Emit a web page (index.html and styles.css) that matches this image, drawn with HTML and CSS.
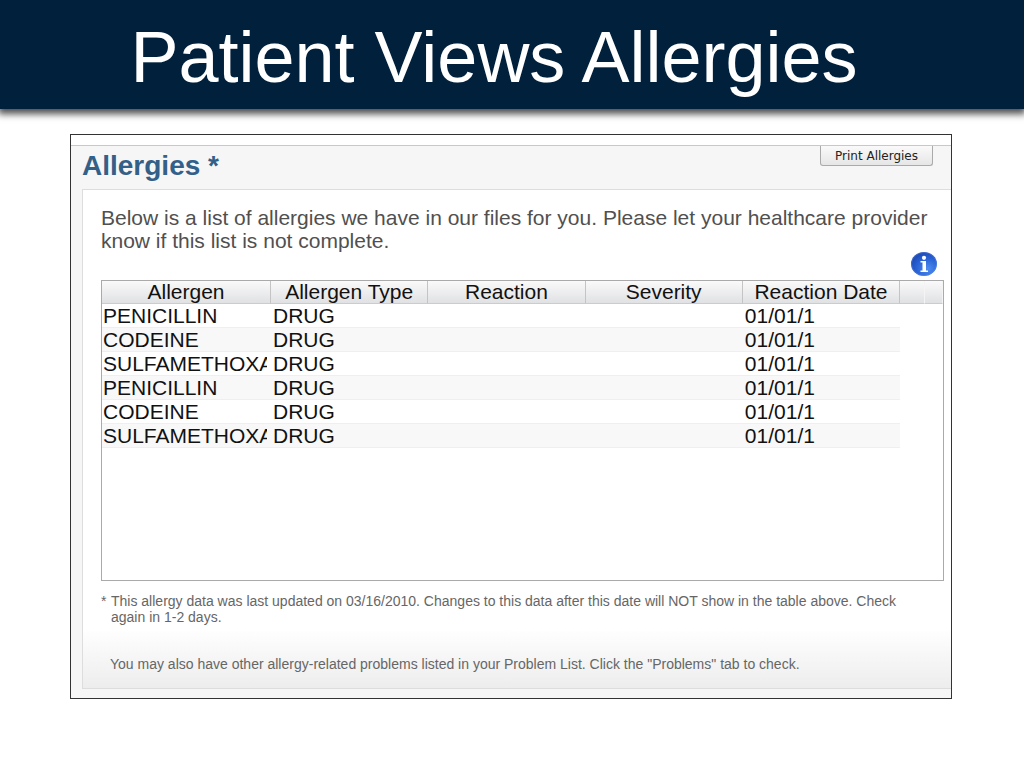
FILE: index.html
```html
<!DOCTYPE html>
<html lang="en">
<head>
    <meta charset="UTF-8">
    <meta name="viewport" content="width=device-width, initial-scale=1.0">
    <title>Patient Views Allergies</title>
    <link rel="stylesheet" href="styles.css">
</head>
<body>

    <header class="title-bar">
        <h1>Patient Views Allergies</h1>
    </header>

    <main class="frame">
        <div class="top-row">
            <h2>Allergies *</h2>
            <button type="button" class="print-btn">Print Allergies</button>
        </div>

        <section class="panel">
            <p class="intro">Below is a list of allergies we have in our files for you. Please let your healthcare provider<br>know if this list is not complete.</p>

            <div class="info-row">
                <button type="button" class="info-btn" aria-label="Information">
                    <svg viewBox="0 0 26 24" width="26" height="24">
                        <defs>
                            <radialGradient id="infoBlue" cx="65%" cy="70%" r="75%">
                                <stop offset="0" stop-color="#4d8df0"/>
                                <stop offset="0.6" stop-color="#2860d4"/>
                                <stop offset="1" stop-color="#1c46b0"/>
                            </radialGradient>
                        </defs>
                        <ellipse cx="13" cy="12" rx="13" ry="12" fill="url(#infoBlue)"/>
                        <ellipse cx="13" cy="12" rx="12.500" ry="11.500" fill="none" stroke="#6d97e6" stroke-width="1" opacity="0.4"/>
                        <circle cx="13" cy="5.800" r="2.100" fill="#fff"/>
                        <path d="M9.500 9h5.500v9.500h2v1.500H9.500v-1.500h2V10.500h-2z" fill="#fff"/>
                    </svg>
                </button>
            </div>

            <div class="table-box">
                <table>
                    <colgroup>
                        <col class="col-first">
                        <col class="col-data">
                        <col class="col-data">
                        <col class="col-data">
                        <col class="col-data">
                        <col class="col-pad">
                        <col>
                    </colgroup>
                    <thead>
                        <tr>
                            <th>Allergen</th>
                            <th>Allergen Type</th>
                            <th>Reaction</th>
                            <th>Severity</th>
                            <th>Reaction Date</th>
                            <th class="pad"></th>
                            <th class="pad"></th>
                        </tr>
                    </thead>
                    <tbody>
                        <tr><td><span>PENICILLIN</span></td><td>DRUG</td><td></td><td></td><td>01/01/1</td></tr>
                        <tr><td><span>CODEINE</span></td><td>DRUG</td><td></td><td></td><td>01/01/1</td></tr>
                        <tr><td><span>SULFAMETHOXA</span></td><td>DRUG</td><td></td><td></td><td>01/01/1</td></tr>
                        <tr><td><span>PENICILLIN</span></td><td>DRUG</td><td></td><td></td><td>01/01/1</td></tr>
                        <tr><td><span>CODEINE</span></td><td>DRUG</td><td></td><td></td><td>01/01/1</td></tr>
                        <tr><td><span>SULFAMETHOXA</span></td><td>DRUG</td><td></td><td></td><td>01/01/1</td></tr>
                    </tbody>
                </table>
            </div>

            <div class="note">
                <span class="star">*</span>
                <p>This allergy data was last updated on 03/16/2010. Changes to this data after this date will NOT show in the table above. Check<br>again in 1-2 days.</p>
            </div>
            <p class="more">You may also have other allergy-related problems listed in your Problem List. Click the "Problems" tab to check.</p>
        </section>
    </main>

</body>
</html>
```
FILE: styles.css
```css
* {
    box-sizing: border-box;
}

body {
    margin: 0;
    background-color: #fff;
    font-family: "Liberation Sans", Arial, sans-serif;
}

h1, h2, p {
    margin: 0;
}

/* Title bar */
.title-bar {
    background-color: #00203c;
    padding: 17px 36px 12px 0;
    box-shadow: 0 3px 7px 2px rgba(0, 0, 0, 0.7);
    text-align: center;
}

.title-bar h1 {
    color: #fff;
    font-size: 72px;
    font-weight: normal;
    line-height: 80px;
}

/* Allergies window */
.frame {
    margin: 25px 72px 0 70px;
    border: 1px solid #333;
    padding: 10px 0 9px;
    background: linear-gradient(#fff 10px, #f6f6f6 10px);
}

.top-row {
    display: flex;
    justify-content: space-between;
    align-items: flex-start;
    height: 44px;
    padding: 0 18px 0 11px;
    border-top: 1px solid #c8c8c8;
}

.top-row h2 {
    padding-top: 4px;
    color: #336088;
    font-size: 28px;
    line-height: 32px;
}

.print-btn {
    width: 113px;
    height: 20px;
    padding: 0;
    border: 1px solid #aaa;
    border-top: none;
    border-radius: 0 0 3px 3px;
    background: linear-gradient(#fafafa, #e6e6e6);
    color: #222;
    font-family: "DejaVu Sans", sans-serif;
    font-size: 12px;
    line-height: 18px;
    white-space: nowrap;
    cursor: pointer;
}

.panel {
    margin-left: 11px;
    padding: 16px 7px 16px 18px;
    border: 1px solid #ddd;
    border-right: none;
    background: linear-gradient(#fff 88%, #ededed);
}

.intro {
    color: #505050;
    font-size: 21px;
    line-height: 23px;
    white-space: nowrap;
}

.info-row {
    display: flex;
    justify-content: flex-end;
    padding-right: 7px;
}

.info-btn {
    padding: 0;
    border: none;
    background: none;
    cursor: pointer;
}

.info-btn svg {
    display: block;
}

/* Allergy table */
.table-box {
    min-height: 301px;
    margin-top: 4px;
    border: 1px solid #aaa;
    background-color: #fff;
}

table {
    width: 100%;
    border-collapse: separate;
    border-spacing: 0;
    table-layout: fixed;
    color: #111;
    font-size: 21px;
    line-height: 23px;
}

.col-first {
    width: 20.1%;
}

.col-data {
    width: 18.7%;
}

.col-pad {
    width: 3%;
}

th {
    height: 23px;
    padding: 0;
    border-right: 1px solid #c4c4c4;
    border-bottom: 1px solid #ccc;
    background: linear-gradient(#fafafa, #e0e1e3);
    font-weight: normal;
    line-height: 22px;
    white-space: nowrap;
}

th.pad {
    border-right-color: #f4f4f4;
}

td {
    height: 24px;
    padding: 0 4px 0 2px;
    border-bottom: 1px solid #efefef;
    white-space: nowrap;
}

td:first-child {
    padding-left: 1px;
}

td span {
    display: block;
    overflow: hidden;
}

tbody tr:nth-child(even) {
    background-color: #f8f8f8;
}

/* Notes under the table */
.note {
    display: flex;
    margin-top: 12px;
}

.star {
    width: 10px;
}

.note, .more {
    color: #666;
    font-size: 14px;
    line-height: 16px;
    white-space: nowrap;
}

.more {
    margin: 31px 0 0 9px;
}
```
